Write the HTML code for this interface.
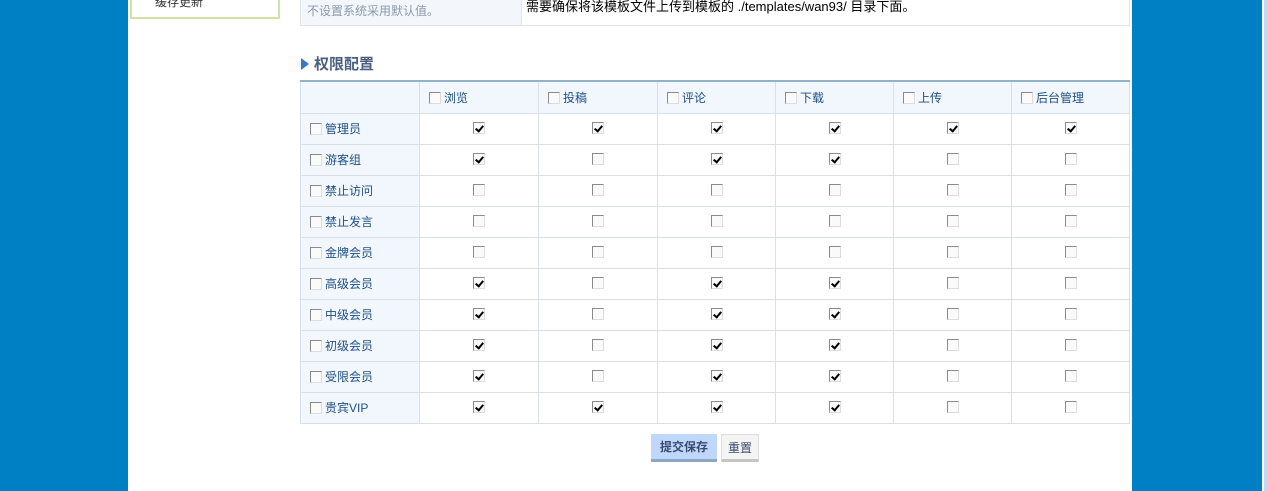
<!DOCTYPE html>
<html><head><meta charset="utf-8"><style>
*{margin:0;padding:0;box-sizing:border-box}
body{width:1268px;height:491px;overflow:hidden;background:#0080c4;position:relative;font-family:"Liberation Sans","Noto Sans CJK SC","WenQuanYi Zen Hei",sans-serif;font-size:12px}
.main{position:absolute;left:128px;top:0;width:1004px;height:491px;background:#fff}
.sb{position:absolute;top:0;height:491px;background:#c8d6f0;border-left:2px solid #fff;width:6px}
.side{position:absolute;left:130px;top:-4px;width:150px;height:23px;border:2px solid #d2e2a6;border-top:none;background:#fff}
.side span{position:absolute;left:23px;top:-3px;color:#333;font-size:12px}
.top{position:absolute;left:300px;top:0;width:830px;height:26px;border:1px solid #dde4ea;border-top:none;display:flex}
.top .a{width:221px;background:#f3f7fb;border-right:1px solid #dde4ea;color:#8a9aaa;padding:2px 0 0 6px}
.top .b{padding:0 0 0 4px;color:#000;margin-top:-4px;font-size:13px}
.h{position:absolute;left:301px;top:53px;font-size:15px;font-weight:bold;color:#4a5e80}
.h:before{content:"";display:inline-block;border-left:8px solid #3a78c8;border-top:6px solid transparent;border-bottom:6px solid transparent;margin-right:5px;vertical-align:-1px}
table{position:absolute;left:300px;top:80px;width:830px;border-collapse:collapse;border-top:2px solid #92b2c8;table-layout:fixed}
td{border:1px solid #d8e0e8;height:31px;color:#1f4f86;font-size:12px;overflow:hidden;white-space:nowrap}
tr:first-child td{height:32px}
td.c{text-align:center}
tr:first-child td{background:#f2f7fd}
td.l{background:#f2f7fd;padding-left:9px}
tr:first-child td:not(.l){padding-left:9px}
.cb{display:inline-block;width:12px;height:12px;border:1px solid #8a8a8a;border-right-color:#ddd;border-bottom-color:#ddd;background:#fafafa;vertical-align:-2px;margin-right:3px;position:relative}
.k:after{content:"";position:absolute;left:3px;top:1px;width:3px;height:6px;border:solid #000;border-width:0 2px 2px 0;transform:rotate(40deg)}
td.c .cb{margin:0;vertical-align:-1px}
.btn{position:absolute;top:434px;height:28px;font-size:12px;font-weight:bold;line-height:26px;text-align:center}
.b1{left:651px;width:66px;background:#bfd7fb;border-bottom:3px solid #8ea8c4;color:#3a4a70}
.b2{left:721px;width:38px;background:#f4f4f4;border:1px solid #ddd;border-bottom:3px solid #c4c4c4;color:#3a4a70;font-weight:normal}
</style></head><body>
<div class="main"></div>
<div class="sb" style="left:1262px"></div>
<div class="side"><span>缓存更新</span></div>
<div class="top"><div class="a">不设置系统采用默认值。</div><div class="b">需要确保将该模板文件上传到模板的 ./templates/wan93/ 目录下面。</div></div>
<div class="h">权限配置</div>
<table>
<colgroup><col style="width:119px"><col style="width:119px"><col style="width:119px"><col style="width:118px"><col style="width:118px"><col style="width:118px"><col style="width:118px"></colgroup>
<tr><td class="l"></td><td><span class="cb"></span>浏览</td><td><span class="cb"></span>投稿</td><td><span class="cb"></span>评论</td><td><span class="cb"></span>下载</td><td><span class="cb"></span>上传</td><td><span class="cb"></span>后台管理</td></tr>
<tr><td class="l"><span class="cb"></span>管理员</td><td class="c"><span class="cb k"></span></td><td class="c"><span class="cb k"></span></td><td class="c"><span class="cb k"></span></td><td class="c"><span class="cb k"></span></td><td class="c"><span class="cb k"></span></td><td class="c"><span class="cb k"></span></td></tr>
<tr><td class="l"><span class="cb"></span>游客组</td><td class="c"><span class="cb k"></span></td><td class="c"><span class="cb"></span></td><td class="c"><span class="cb k"></span></td><td class="c"><span class="cb k"></span></td><td class="c"><span class="cb"></span></td><td class="c"><span class="cb"></span></td></tr>
<tr><td class="l"><span class="cb"></span>禁止访问</td><td class="c"><span class="cb"></span></td><td class="c"><span class="cb"></span></td><td class="c"><span class="cb"></span></td><td class="c"><span class="cb"></span></td><td class="c"><span class="cb"></span></td><td class="c"><span class="cb"></span></td></tr>
<tr><td class="l"><span class="cb"></span>禁止发言</td><td class="c"><span class="cb"></span></td><td class="c"><span class="cb"></span></td><td class="c"><span class="cb"></span></td><td class="c"><span class="cb"></span></td><td class="c"><span class="cb"></span></td><td class="c"><span class="cb"></span></td></tr>
<tr><td class="l"><span class="cb"></span>金牌会员</td><td class="c"><span class="cb"></span></td><td class="c"><span class="cb"></span></td><td class="c"><span class="cb"></span></td><td class="c"><span class="cb"></span></td><td class="c"><span class="cb"></span></td><td class="c"><span class="cb"></span></td></tr>
<tr><td class="l"><span class="cb"></span>高级会员</td><td class="c"><span class="cb k"></span></td><td class="c"><span class="cb"></span></td><td class="c"><span class="cb k"></span></td><td class="c"><span class="cb k"></span></td><td class="c"><span class="cb"></span></td><td class="c"><span class="cb"></span></td></tr>
<tr><td class="l"><span class="cb"></span>中级会员</td><td class="c"><span class="cb k"></span></td><td class="c"><span class="cb"></span></td><td class="c"><span class="cb k"></span></td><td class="c"><span class="cb k"></span></td><td class="c"><span class="cb"></span></td><td class="c"><span class="cb"></span></td></tr>
<tr><td class="l"><span class="cb"></span>初级会员</td><td class="c"><span class="cb k"></span></td><td class="c"><span class="cb"></span></td><td class="c"><span class="cb k"></span></td><td class="c"><span class="cb k"></span></td><td class="c"><span class="cb"></span></td><td class="c"><span class="cb"></span></td></tr>
<tr><td class="l"><span class="cb"></span>受限会员</td><td class="c"><span class="cb k"></span></td><td class="c"><span class="cb"></span></td><td class="c"><span class="cb k"></span></td><td class="c"><span class="cb k"></span></td><td class="c"><span class="cb"></span></td><td class="c"><span class="cb"></span></td></tr>
<tr><td class="l"><span class="cb"></span>贵宾VIP</td><td class="c"><span class="cb k"></span></td><td class="c"><span class="cb k"></span></td><td class="c"><span class="cb k"></span></td><td class="c"><span class="cb k"></span></td><td class="c"><span class="cb"></span></td><td class="c"><span class="cb"></span></td></tr>
</table>
<div class="btn b1">提交保存</div>
<div class="btn b2">重置</div>
</body></html>
